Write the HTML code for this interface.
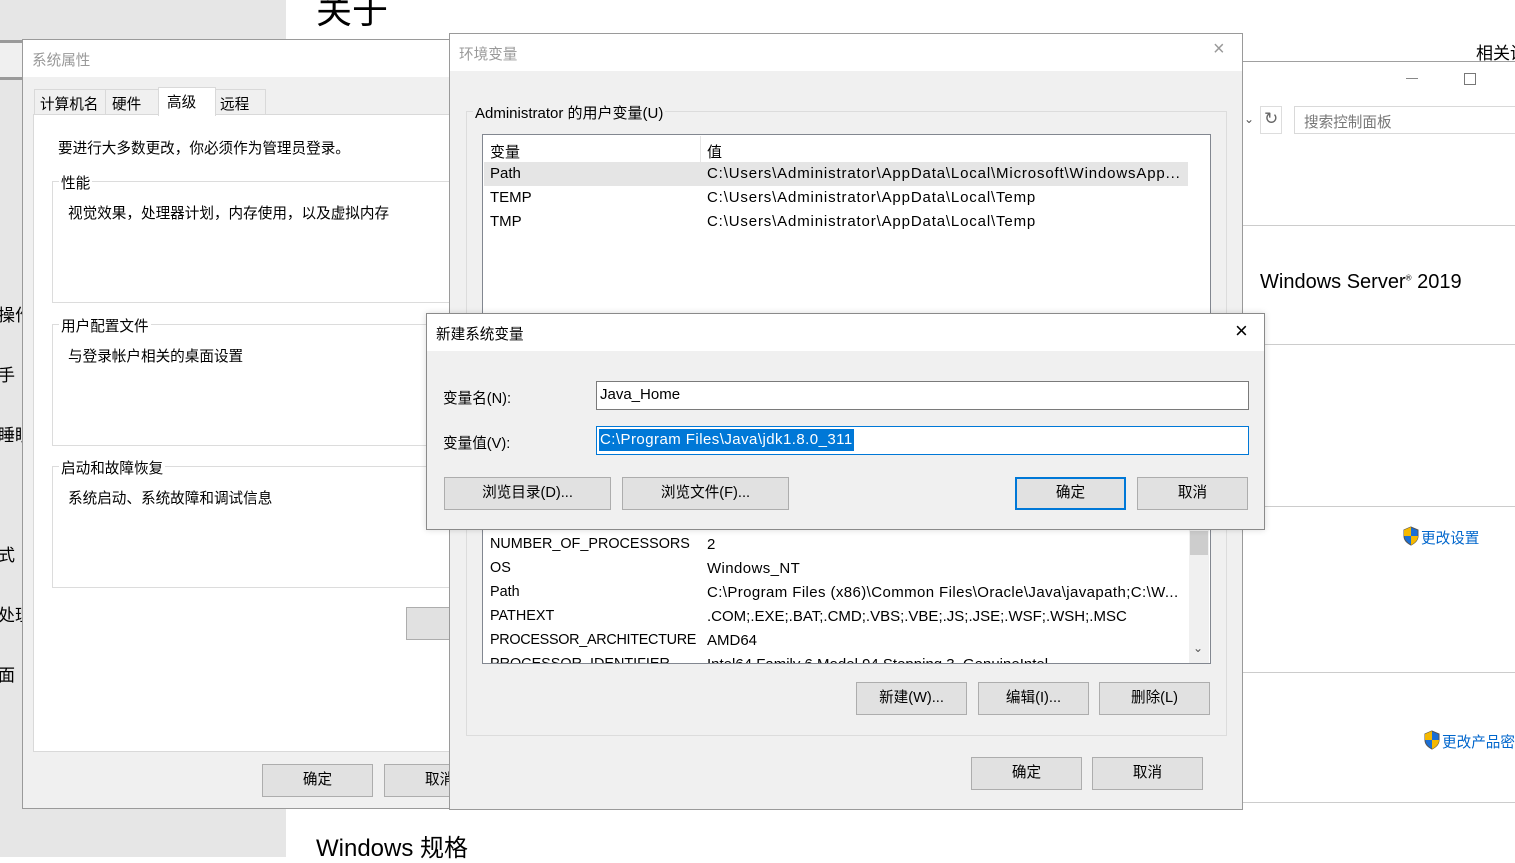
<!DOCTYPE html>
<html><head><meta charset="utf-8"><style>
*{box-sizing:border-box;margin:0;padding:0}
body{width:1515px;height:857px;overflow:hidden;position:relative;background:#fff;font-family:"Liberation Sans","Noto Sans CJK SC",sans-serif;font-size:14.6px;color:#000}
.a{position:absolute;white-space:nowrap}
.btn{position:absolute;background:#e1e1e1;border:1px solid #adadad;text-align:center;font-size:14.6px}
.gb{position:absolute;border:1px solid #dcdcdc}
.lst{font-size:15px}
.v1{letter-spacing:.85px}
.v2{letter-spacing:.4px}
.n2{font-size:14.4px}
</style></head><body>
<div class="a" style="left:0;top:0;width:286px;height:857px;background:#e6e6e6"></div>
<div class="a" style="left:316px;top:-18px;font-size:36px">关于</div>
<div class="a" style="left:316px;top:828px;font-size:24px">Windows 规格</div>
<div class="a" style="left:0;top:40px;width:24px;height:40px;background:#f0f0f0;border-top:3px solid #9a9a9a;border-bottom:3px solid #9a9a9a"></div>
<div class="a" style="left:-2px;top:301px;font-size:17px">操作</div>
<div class="a" style="left:-2px;top:361px;font-size:17px">手</div>
<div class="a" style="left:-2px;top:421px;font-size:17px">睡眠</div>
<div class="a" style="left:-2px;top:541px;font-size:17px">式</div>
<div class="a" style="left:-2px;top:601px;font-size:17px">处理</div>
<div class="a" style="left:-2px;top:661px;font-size:17px">面</div>

<div class="a" style="left:1476px;top:39px;font-size:17px">相关设</div>
<div class="a" style="left:1242px;top:61px;width:273px;height:1px;background:#a0a0a0"></div>
<div class="a" style="left:1406px;top:78px;width:12px;height:1px;background:#888"></div>
<div class="a" style="left:1464px;top:73px;width:12px;height:12px;border:1px solid #777"></div>
<div class="a" style="left:1244px;top:112px;font-size:12px;color:#555">⌄</div>
<div class="a" style="left:1260px;top:106px;width:22px;height:28px;border:1px solid #ddd"></div>
<div class="a" style="left:1264px;top:109px;font-size:17px;color:#666">↻</div>
<div class="a" style="left:1294px;top:106px;width:230px;height:28px;border:1px solid #d9d9d9;padding:4px 9px;color:#777;font-size:14.6px">搜索控制面板</div>
<div class="a" style="left:1242px;top:225px;width:273px;height:1px;background:#ccc"></div>
<div class="a" style="left:1260px;top:271px;font-size:20px">Windows Server<sup style="font-size:8px">®</sup> 2019</div>
<div class="a" style="left:1242px;top:344px;width:273px;height:1px;background:#ccc"></div>
<div class="a" style="left:1242px;top:506px;width:273px;height:1px;background:#ccc"></div>
<div class="a" style="left:1242px;top:672px;width:273px;height:1px;background:#ccc"></div>
<div class="a" style="left:1242px;top:802px;width:273px;height:1px;background:#ccc"></div>
<svg class="a" style="left:1402px;top:526px" width="18" height="20" viewBox="0 0 18 20"><path d="M9 1L2 4v6c0 4 3 7 7 9 4-2 7-5 7-9V4z" fill="#1a6fd6" stroke="#555"/><path d="M9 1v9H2V4z M9 10h7c0 4-3 7-7 9z" fill="#f5b800"/></svg>
<div class="a" style="left:1421px;top:527px;color:#0066cc">更改设置</div>
<svg class="a" style="left:1423px;top:730px" width="18" height="20" viewBox="0 0 18 20"><path d="M9 1L2 4v6c0 4 3 7 7 9 4-2 7-5 7-9V4z" fill="#1a6fd6" stroke="#555"/><path d="M9 1v9H2V4z M9 10h7c0 4-3 7-7 9z" fill="#f5b800"/></svg>
<div class="a" style="left:1442px;top:731px;color:#0066cc">更改产品密</div>

<div class="a" style="left:22px;top:39px;width:440px;height:770px;background:#f0f0f0;border:1px solid #9a9a9a"></div>
<div class="a" style="left:23px;top:40px;width:430px;height:37px;background:#fff"></div>
<div class="a" style="left:32px;top:49px;color:#999">系统属性</div>
<div class="a" style="left:34px;top:89px;width:72px;height:26px;border:1px solid #d9d9d9;background:#f0f0f0;padding:3px 5px">计算机名</div>
<div class="a" style="left:105px;top:89px;width:54px;height:26px;border:1px solid #d9d9d9;background:#f0f0f0;padding:3px 6px">硬件</div>
<div class="a" style="left:210px;top:89px;width:56px;height:26px;border:1px solid #d9d9d9;background:#f0f0f0;padding:3px 9px">远程</div>
<div class="a" style="left:33px;top:114px;width:430px;height:638px;background:#fff;border:1px solid #d9d9d9"></div>
<div class="a" style="left:158px;top:87px;width:58px;height:29px;background:#fff;border:1px solid #d9d9d9;border-bottom:none;padding:3px 8px">高级</div>
<div class="a" style="left:58px;top:137px">要进行大多数更改，你必须作为管理员登录。</div>
<div class="gb" style="left:52px;top:181px;width:420px;height:122px"></div>
<div class="a" style="left:59px;top:172px;background:#fff;padding:0 2px">性能</div>
<div class="a" style="left:68px;top:202px">视觉效果，处理器计划，内存使用，以及虚拟内存</div>
<div class="gb" style="left:52px;top:324px;width:420px;height:122px"></div>
<div class="a" style="left:59px;top:315px;background:#fff;padding:0 2px">用户配置文件</div>
<div class="a" style="left:68px;top:345px">与登录帐户相关的桌面设置</div>
<div class="gb" style="left:52px;top:466px;width:420px;height:122px"></div>
<div class="a" style="left:59px;top:457px;background:#fff;padding:0 2px">启动和故障恢复</div>
<div class="a" style="left:68px;top:487px">系统启动、系统故障和调试信息</div>
<div class="btn" style="left:406px;top:607px;width:60px;height:33px"></div>
<div class="btn" style="left:262px;top:764px;width:111px;height:33px;line-height:31px">确定</div>
<div class="btn" style="left:384px;top:764px;width:100px;height:33px;line-height:31px;text-align:left;padding-left:40px">取消</div>

<div class="a" style="left:449px;top:33px;width:794px;height:777px;background:#f0f0f0;border:1px solid #9a9a9a"></div>
<div class="a" style="left:450px;top:34px;width:792px;height:37px;background:#fff"></div>
<div class="a" style="left:459px;top:43px;color:#999">环境变量</div>
<div class="a" style="left:1213px;top:38px;color:#999;font-size:20px">×</div>
<div class="gb" style="left:466px;top:111px;width:761px;height:625px"></div>
<div class="a lst" style="left:473px;top:102px;background:#f0f0f0;padding:0 2px">Administrator 的用户变量(U)</div>
<div class="a" style="left:482px;top:134px;width:729px;height:200px;background:#fff;border:1px solid #828790"></div>
<div class="a" style="left:700px;top:136px;width:1px;height:26px;background:#e5e5e5"></div>
<div class="a" style="left:484px;top:162px;width:704px;height:24px;background:#e5e5e5"></div>
<div class="a lst" style="left:490px;top:141px">变量</div>
<div class="a lst" style="left:707px;top:141px">值</div>
<div class="a lst" style="left:490px;top:165px">Path</div>
<div class="a lst v1" style="left:707px;top:165px">C:\Users\Administrator\AppData\Local\Microsoft\WindowsApp...</div>
<div class="a lst" style="left:490px;top:189px">TEMP</div>
<div class="a lst v1" style="left:707px;top:189px">C:\Users\Administrator\AppData\Local\Temp</div>
<div class="a lst" style="left:490px;top:213px">TMP</div>
<div class="a lst v1" style="left:707px;top:213px">C:\Users\Administrator\AppData\Local\Temp</div>

<div class="a" style="left:482px;top:520px;width:729px;height:144px;background:#fff;border:1px solid #828790;overflow:hidden">
<div class="a" style="left:706px;top:0;width:20px;height:142px;background:#f0f0f0"></div>
<div class="a" style="left:707px;top:10px;width:18px;height:24px;background:#cdcdcd"></div>
<div class="a" style="left:710px;top:120px;font-size:12px;color:#555">⌄</div>
<div class="a lst n2" style="left:7px;top:15px">NUMBER_OF_PROCESSORS</div><div class="a lst" style="left:224px;top:15px">2</div>
<div class="a lst n2" style="left:7px;top:39px">OS</div><div class="a lst v2" style="left:224px;top:39px">Windows_NT</div>
<div class="a lst n2" style="left:7px;top:63px">Path</div><div class="a lst v2" style="left:224px;top:63px">C:\Program Files (x86)\Common Files\Oracle\Java\javapath;C:\W...</div>
<div class="a lst n2" style="left:7px;top:87px">PATHEXT</div><div class="a lst" style="left:224px;top:87px">.COM;.EXE;.BAT;.CMD;.VBS;.VBE;.JS;.JSE;.WSF;.WSH;.MSC</div>
<div class="a lst n2" style="left:7px;top:111px;letter-spacing:-.3px">PROCESSOR_ARCHITECTURE</div><div class="a lst" style="left:224px;top:111px">AMD64</div>
<div class="a lst n2" style="left:7px;top:135px">PROCESSOR_IDENTIFIER</div><div class="a lst" style="left:224px;top:135px">Intel64 Family 6 Model 94 Stepping 3, GenuineIntel</div>
</div>
<div class="btn" style="left:856px;top:682px;width:111px;height:33px;line-height:31px">新建(W)...</div>
<div class="btn" style="left:978px;top:682px;width:111px;height:33px;line-height:31px">编辑(I)...</div>
<div class="btn" style="left:1099px;top:682px;width:111px;height:33px;line-height:31px">删除(L)</div>
<div class="btn" style="left:971px;top:757px;width:111px;height:33px;line-height:31px">确定</div>
<div class="btn" style="left:1092px;top:757px;width:111px;height:33px;line-height:31px">取消</div>

<div class="a" style="left:426px;top:313px;width:839px;height:217px;background:#f0f0f0;border:1px solid #8a8a8a;box-shadow:0 0 6px rgba(0,0,0,.15)"></div>
<div class="a" style="left:427px;top:314px;width:837px;height:37px;background:#fff"></div>
<div class="a" style="left:436px;top:323px">新建系统变量</div>
<div class="a" style="left:1235px;top:318px;font-size:22px">×</div>
<div class="a" style="left:443px;top:387px">变量名(N):</div>
<div class="a" style="left:443px;top:432px">变量值(V):</div>
<div class="a lst" style="left:596px;top:381px;width:653px;height:29px;background:#fff;border:1px solid #7a7a7a;padding:4px 3px">Java_Home</div>
<div class="a" style="left:596px;top:426px;width:653px;height:29px;background:#fff;border:1px solid #0078d7"></div>
<div class="a lst" style="left:599px;top:429px;height:22px;background:#0078d7;color:#fff;padding:0 1px;line-height:22px;letter-spacing:.45px">C:\Program Files\Java\jdk1.8.0_311</div>
<div class="btn" style="left:444px;top:477px;width:167px;height:33px;line-height:31px">浏览目录(D)...</div>
<div class="btn" style="left:622px;top:477px;width:167px;height:33px;line-height:31px">浏览文件(F)...</div>
<div class="btn" style="left:1015px;top:477px;width:111px;height:33px;line-height:29px;border:2px solid #0078d7">确定</div>
<div class="btn" style="left:1137px;top:477px;width:111px;height:33px;line-height:31px">取消</div>
</body></html>
